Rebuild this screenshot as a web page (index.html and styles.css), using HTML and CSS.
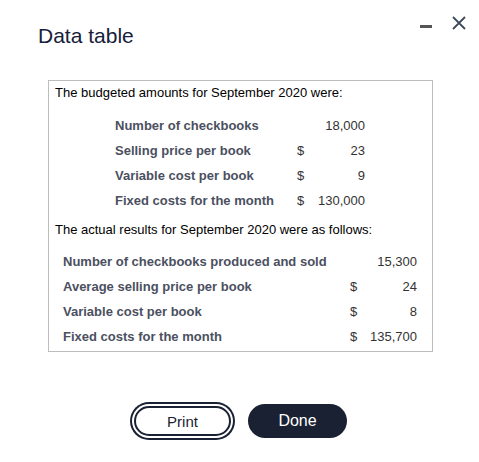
FILE: index.html
```html
<!DOCTYPE html>
<html>
<head>
<meta charset="utf-8">
<link rel="stylesheet" href="styles.css">
</head>
<body>
<div class="dialog">
  <div class="controls">
    <svg class="icon-min" width="14" height="14" viewBox="0 0 14 14"><rect x="1" y="6" width="12" height="3" fill="#555"/></svg>
    <svg class="icon-close" width="16" height="16" viewBox="0 0 16 16"><path d="M2 2 L14 14 M14 2 L2 14" stroke="#3f4b5b" stroke-width="1.8" fill="none"/></svg>
  </div>
  <h1 class="title">Data table</h1>
  <div class="box">
    <p class="intro">The budgeted amounts for September 2020 were:</p>
    <table class="tbl tbl-budget">
      <tr><td class="lbl">Number of checkbooks</td><td class="cur"></td><td class="val">18,000</td></tr>
      <tr><td class="lbl">Selling price per book</td><td class="cur">$</td><td class="val">23</td></tr>
      <tr><td class="lbl">Variable cost per book</td><td class="cur">$</td><td class="val">9</td></tr>
      <tr><td class="lbl">Fixed costs for the month</td><td class="cur">$</td><td class="val">130,000</td></tr>
    </table>
    <p class="intro intro2">The actual results for September 2020 were as follows:</p>
    <table class="tbl tbl-actual">
      <tr><td class="lbl">Number of checkbooks produced and sold</td><td class="cur"></td><td class="val">15,300</td></tr>
      <tr><td class="lbl">Average selling price per book</td><td class="cur">$</td><td class="val">24</td></tr>
      <tr><td class="lbl">Variable cost per book</td><td class="cur">$</td><td class="val">8</td></tr>
      <tr><td class="lbl">Fixed costs for the month</td><td class="cur">$</td><td class="val">135,700</td></tr>
    </table>
  </div>
  <div class="actions">
    <button class="btn btn-print">Print</button>
    <button class="btn btn-done">Done</button>
  </div>
</div>
</body>
</html>
```
FILE: styles.css
```css
html, body {
  margin: 0;
  padding: 0;
  background: #fff;
  font-family: "Liberation Sans", Arial, sans-serif;
}
.dialog {
  width: 479px;
  height: 462px;
  position: relative;
}
.controls {
  position: absolute;
  top: 13px;
  right: 12px;
  display: flex;
  align-items: center;
  gap: 18px;
}
.icon-min {
  margin-top: 6px;
}
.title {
  margin: 0;
  padding: 23px 0 0 38px;
  font-size: 21px;
  font-weight: normal;
  color: #16203a;
  line-height: 26px;
}
.box {
  margin: 31px 0 0 48px;
  width: 377px;
  border: 1px solid #bdbdbd;
  padding: 4px 0 2px 6px;
}
.intro {
  margin: 0;
  font-size: 13px;
  line-height: 16px;
  color: #000;
}
.intro2 {
  margin-top: 9px;
}
.tbl {
  border-collapse: collapse;
  font-size: 13px;
  color: #4b5060;
  margin-top: 12px;
}
.tbl td {
  padding: 0;
  height: 25px;
  vertical-align: middle;
}
.tbl .lbl {
  font-weight: bold;
}
.tbl .val {
  text-align: right;
  font-weight: normal;
  color: #333;
}
.tbl .cur {
  color: #333;
}
.tbl-budget {
  margin-left: 60px;
}
.tbl-budget .lbl { width: 182px; }
.tbl-budget .cur { width: 18px; }
.tbl-budget .val { width: 50px; }
.tbl-actual {
  margin-left: 8px;
  margin-top: 11px;
}
.tbl-actual .lbl { width: 287px; }
.tbl-actual .cur { width: 18px; }
.tbl-actual .val { width: 49px; }
.actions {
  display: flex;
  gap: 17px;
  margin: 52px 0 0 134px;
  align-items: center;
}
.btn {
  font-family: "Liberation Sans", Arial, sans-serif;
  border-radius: 20px;
  cursor: pointer;
  padding: 0;
}
.btn-print {
  width: 97px;
  height: 30px;
  font-size: 15px;
  background: #fff;
  color: #1a2133;
  border: 2px solid #1a2133;
  box-shadow: 0 0 0 2px #fff, 0 0 0 4px #1a2133;
}
.btn-done {
  width: 99px;
  height: 34px;
  font-size: 16px;
  background: #1a2133;
  color: #fff;
  border: none;
}
```
